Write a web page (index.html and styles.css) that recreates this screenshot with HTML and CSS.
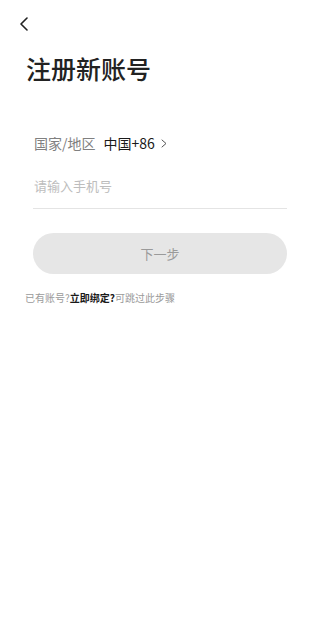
FILE: index.html
```html
<!DOCTYPE html>
<html lang="zh-CN">
<head>
<meta charset="utf-8">
<title>注册新账号</title>
<link rel="stylesheet" href="styles.css">
</head>
<body>
<div class="page">
  <div class="topbar">
    <svg class="back" width="10" height="14" viewBox="0 0 10 14" aria-hidden="true">
      <path d="M8 1 L2 7 L8 13" fill="none" stroke="#222" stroke-width="1.6" stroke-linecap="round" stroke-linejoin="round"/>
    </svg>
  </div>
  <h1 class="title">注册新账号</h1>
  <div class="form">
    <div class="region">
      <span class="region-label">国家/地区</span>
      <span class="region-value">中国+86</span>
      <svg class="chev" width="6" height="9" viewBox="0 0 6 9" aria-hidden="true">
        <path d="M1 1 L5 4.5 L1 8" fill="none" stroke="#555" stroke-width="1" stroke-linecap="round" stroke-linejoin="round"/>
      </svg>
    </div>
    <div class="phone">
      <span class="placeholder">请输入手机号</span>
    </div>
    <button class="next" type="button">下一步</button>
  </div>
  <p class="tip">已有账号?<b>立即绑定?</b>可跳过此步骤</p>
</div>
</body>
</html>
```
FILE: styles.css
```css
html, body {
  margin: 0;
  padding: 0;
  background: #fff;
}
body {
  font-family: "Noto Sans CJK SC", "Noto Sans", sans-serif;
  color: #222;
}
.page {
  width: 315px;
  min-height: 636px;
}
.topbar {
  height: 32px;
  padding: 17px 0 0 19px;
  box-sizing: border-box;
}
.back {
  display: block;
}
.title {
  margin: 24px 0 0 26px;
  font-size: 25px;
  line-height: 25px;
  font-weight: 500;
  color: #222;
}
.form {
  margin: 54px 28px 0 33px;
}
.region {
  display: flex;
  align-items: center;
  height: 16px;
  font-size: 14px;
  line-height: 16px;
  padding-left: 1px;
}
.region-label {
  color: #808080;
}
.region-value {
  margin-left: 8px;
  color: #1a1a1a;
}
.chev {
  margin-left: 6px;
}
.phone {
  margin-top: 27px;
  height: 31px;
  border-bottom: 1px solid #e4e4e4;
  padding-left: 1px;
  box-sizing: border-box;
}
.placeholder {
  display: block;
  font-size: 13px;
  line-height: 16px;
  color: #bdbdbd;
}
.next {
  display: block;
  width: 254px;
  height: 41px;
  margin-top: 24px;
  border: 0;
  border-radius: 21px;
  background: #e6e6e6;
  color: #9a9a9a;
  font-family: inherit;
  font-size: 13px;
  padding: 0;
}
.tip {
  margin: 18px 0 0 25px;
  font-size: 10px;
  line-height: 12px;
  color: #9a9a9a;
}
.tip b {
  color: #1a1a1a;
  font-weight: 700;
}
```
